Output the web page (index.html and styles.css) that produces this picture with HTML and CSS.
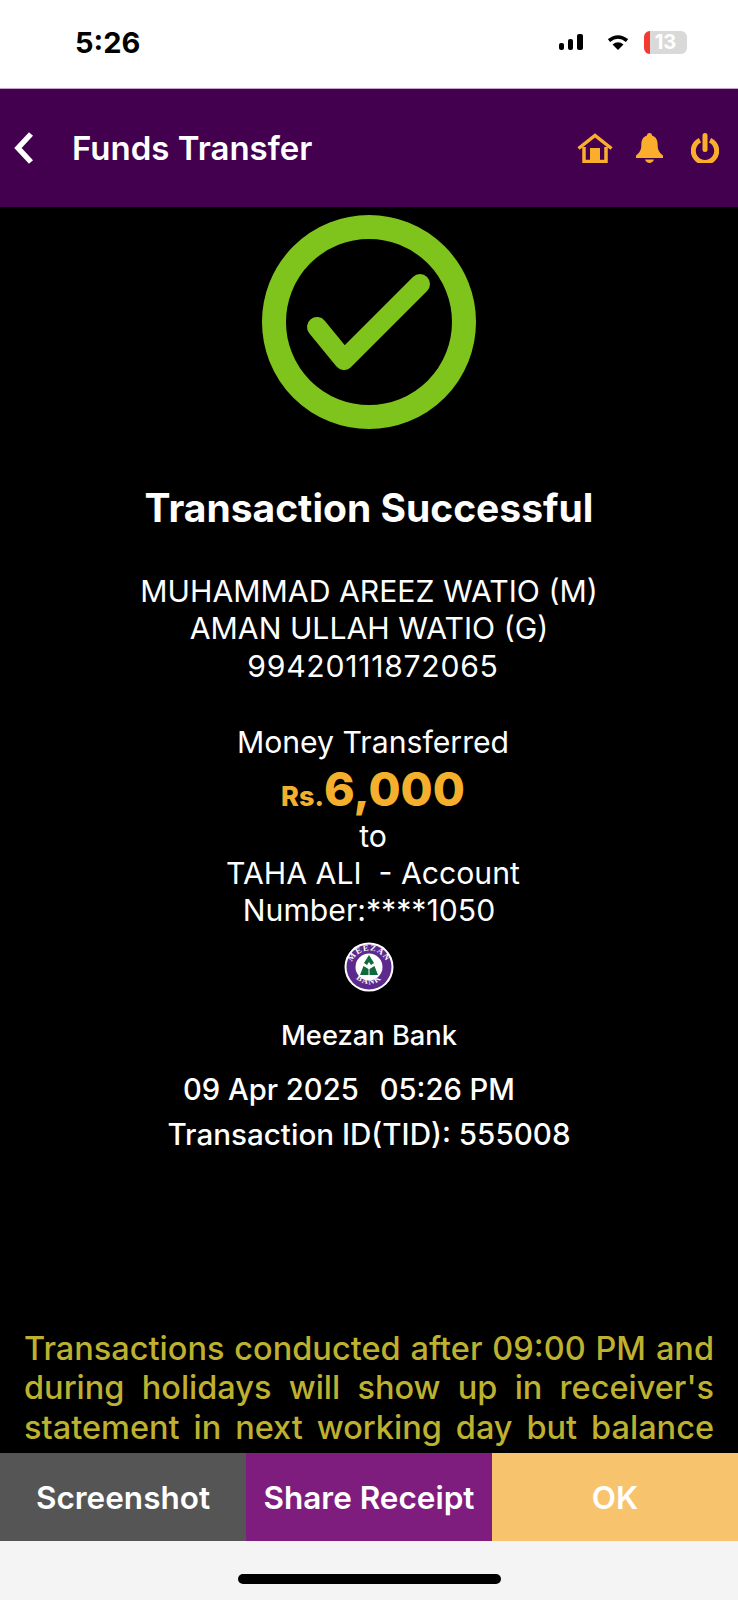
FILE: index.html
```html
<!doctype html>
<html lang="en">
<head>
	<meta charset="UTF-8" />
	<title>Funds Transfer</title>
	<link rel="stylesheet" href="styles.css">
</head>
<body>
	<section class="phone">
		<div class="status">
			<span class="time">5:26</span>
			<div class="status-icons">
				<svg class="signal" width="24" height="16" viewBox="0 0 24 16"><rect x="0" y="9" width="5" height="7" rx="2"/><rect x="9" y="5" width="5" height="11" rx="2"/><rect x="18" y="0" width="6" height="16" rx="2"/></svg>
				<svg class="wifi" width="20" height="15" viewBox="0 0 20 15"><path d="M1 5.500Q10-1.500 19 5.500" fill="none" stroke="#000" stroke-width="3.500"/><path d="M4.500 9.500Q10 5 15.500 9.500L10 15Z"/></svg>
				<div class="battery"><span class="battery-low"></span><span class="battery-num">13</span></div>
			</div>
		</div>
		<header class="bar">
			<svg class="back" width="24" height="34" viewBox="0 0 24 34"><path d="M19 3 6 17l13 14" fill="none" stroke="#fff" stroke-width="5.500"/></svg>
			<h1>Funds Transfer</h1>
			<div class="bar-icons">
				<svg class="icon-home" width="36" height="30" viewBox="0 0 36 30"><path d="M1.500 15.500 18 2.500l16.500 13" fill="none" stroke="#fbae2c" stroke-width="3.500"/><path d="M7 14v14.500h22V14" fill="none" stroke="#fbae2c" stroke-width="3.500"/><rect x="13" y="15" width="10" height="14" fill="#fbae2c"/></svg>
				<svg class="icon-bell" width="27" height="30" viewBox="0 0 27 30"><path fill="#fbae2c" d="M13.500 0c1.600 0 2.500 1 2.500 2.600 4.500 1.400 5.700 5 5.700 9.900 0 4.800 2 7.500 5.300 10V25H0v-2.500c3.300-2.500 5.300-5.200 5.300-10 0-4.900 1.200-8.500 5.700-9.900C11 1 11.900 0 13.500 0zM9 26.500h9c-.8 2-2.500 3.500-4.500 3.500S9.800 28.500 9 26.500z"/></svg>
				<svg class="icon-power" width="28" height="30" viewBox="0 0 28 30"><path d="M9 7.200a11.700 11.700 0 1 0 10 0" fill="none" stroke="#fbae2c" stroke-width="5"/><path d="M14 2.500v14" fill="none" stroke="#fbae2c" stroke-width="5" stroke-linecap="round"/></svg>
			</div>
		</header>
		<main class="content">
			<svg class="tick" width="214" height="214" viewBox="0 0 214 214"><circle cx="107" cy="107" r="95" fill="none" stroke="#7fc41c" stroke-width="24"/><path d="M55 112 82 145 158 69" fill="none" stroke="#7fc41c" stroke-width="20" stroke-linecap="round" stroke-linejoin="round"/></svg>
			<h2>Transaction Successful</h2>
			<div class="lines sender">
				<p>MUHAMMAD AREEZ WATIO (M)</p>
				<p>AMAN ULLAH WATIO (G)</p>
				<p class="digits">99420111872065</p>
			</div>
			<div class="lines transfer">
				<p>Money Transferred</p>
				<p class="amount"><span class="currency">Rs.</span>6,000</p>
				<p>to</p>
				<p>TAHA ALI&nbsp; - Account</p>
				<p>Number:****1050</p>
			</div>
			<svg class="logo" width="50" height="50" viewBox="0 0 50 50">
				<circle cx="25" cy="25" r="24.500" fill="#fff"/>
				<circle cx="25" cy="25" r="22.500" fill="#5c2a8c"/>
				<circle cx="25" cy="25" r="13.500" fill="#fff"/>
				<path fill="#0f6b3a" d="M25 13l5 8-3 2-2-3-2 3-3-2zM16 33l3.500-9 5 3v6zM34 33l-3.500-9-5 3v6z"/>
				<path id="logo-top" d="M6.500 27a18.500 18.500 0 0 1 37 0" fill="none"/>
				<path id="logo-bottom" d="M10 34a18 18 0 0 0 30 0" fill="none"/>
				<text class="logo-text"><textPath href="#logo-top" startOffset="50%" text-anchor="middle">MEEZAN</textPath></text>
				<text class="logo-text"><textPath href="#logo-bottom" startOffset="50%" text-anchor="middle">BANK</textPath></text>
			</svg>
			<p class="bank">Meezan Bank</p>
			<div class="date"><span>09 Apr 2025</span><span>05:26 PM</span></div>
			<p class="tid">Transaction ID(TID): 555008</p>
			<p class="notice">Transactions conducted after 09:00 PM and during holidays will show up in receiver's statement in next working day but balance</p>
		</main>
		<nav class="actions">
			<a href="javascript:;" class="shot">Screenshot</a>
			<a href="javascript:;" class="share">Share Receipt</a>
			<a href="javascript:;" class="ok">OK</a>
		</nav>
		<footer class="home"><span></span></footer>
	</section>
</body>
</html>
```
FILE: styles.css
```css
body{
	margin: 0;
	font-family: Inter, "Liberation Sans", sans-serif;
}
p, h1, h2{
	margin: 0;
}
.phone{
	width: 738px;
	height: 1600px;
	display: flex;
	flex-direction: column;
	background: #000;
}
.status{
	height: 88px;
	flex: none;
	background: #fff;
	display: flex;
	align-items: center;
	justify-content: space-between;
	padding: 0 51px 4px 75px;
	box-sizing: border-box;
}
.time{
	font-size: 29px;
	font-weight: 700;
	color: #000;
}
.status-icons{
	display: flex;
	align-items: center;
	gap: 25px;
}
.wifi{
	margin-right: -9px;
}
.battery{
	width: 43px;
	height: 23px;
	border-radius: 6px;
	background: #d9d9d9;
	position: relative;
	overflow: hidden;
	text-align: center;
	font-size: 20px;
	font-weight: 700;
	line-height: 23px;
	color: #fff;
}
.battery-low{
	position: absolute;
	left: 0;
	top: 0;
	width: 6px;
	height: 23px;
	background: #f23a30;
}
.bar{
	height: 119px;
	flex: none;
	background: #42004f;
	border-top: 1px solid #c9a3d0;
	box-sizing: border-box;
	display: flex;
	align-items: center;
	padding: 0 19px 0 12px;
	color: #fff;
}
.back{
	flex: none;
}
.bar h1{
	font-size: 33px;
	font-weight: 600;
	margin-left: 36px;
}
.bar-icons{
	margin-left: auto;
	display: flex;
	align-items: center;
}
.icon-bell{
	margin-left: 23px;
}
.icon-power{
	margin-left: 28px;
}
.content{
	flex: 1;
	min-height: 0;
	overflow: hidden;
	display: flex;
	flex-direction: column;
	align-items: center;
	text-align: center;
	color: #fff;
	font-size: 30.200px;
	line-height: 37px;
}
.tick{
	flex: none;
	margin-top: 8px;
}
.content h2{
	font-size: 39px;
	font-weight: 700;
	line-height: 44px;
	margin-top: 57px;
}
.sender{
	margin-top: 43px;
}
.digits{
	letter-spacing: .7px;
	padding-left: 8px;
	margin-top: 1px;
}
.transfer{
	margin-top: 39px;
}
.transfer p{
	padding-left: 8px;
}
.transfer p:last-child{
	padding-left: 0;
}
.amount{
	font-size: 46.500px;
	font-weight: 800;
	line-height: 56px;
	color: #f4b02c;
}
.currency{
	font-size: 27px;
}
.amount + p{
	margin-top: -7px;
}
.logo{
	flex: none;
	margin-top: 13px;
}
.logo-text{
	font-family: "Liberation Serif", serif;
	font-size: 8.500px;
	font-weight: 700;
	letter-spacing: 1px;
	fill: #fff;
}
.bank{
	font-size: 27.300px;
	font-weight: 500;
	margin-top: 25px;
}
.date{
	font-size: 29.200px;
	font-weight: 500;
	display: flex;
	gap: 21px;
	margin-top: 17px;
	padding-right: 40px;
}
.tid{
	font-size: 29.600px;
	font-weight: 500;
	margin-top: 8px;
}
.notice{
	margin-top: auto;
	padding: 0 24px 6px;
	color: #bdb12f;
	font-size: 32.500px;
	line-height: 39.500px;
	font-weight: 500;
	text-align: justify;
	text-align-last: justify;
}
.actions{
	height: 88px;
	flex: none;
	display: grid;
	grid-template-columns: repeat(3, 246px);
}
.actions a{
	display: flex;
	align-items: center;
	justify-content: center;
	color: #fff;
	font-size: 31.500px;
	font-weight: 600;
	text-decoration: none;
}
.shot{
	background: #555;
}
.share{
	background: #7f1d7f;
}
.ok{
	background: #f8c36d;
}
.home{
	height: 59px;
	flex: none;
	background: #f4f4f4;
	display: flex;
	justify-content: center;
	padding-top: 33px;
	box-sizing: border-box;
}
.home span{
	width: 263px;
	height: 10px;
	border-radius: 5px;
	background: #000;
}
```
